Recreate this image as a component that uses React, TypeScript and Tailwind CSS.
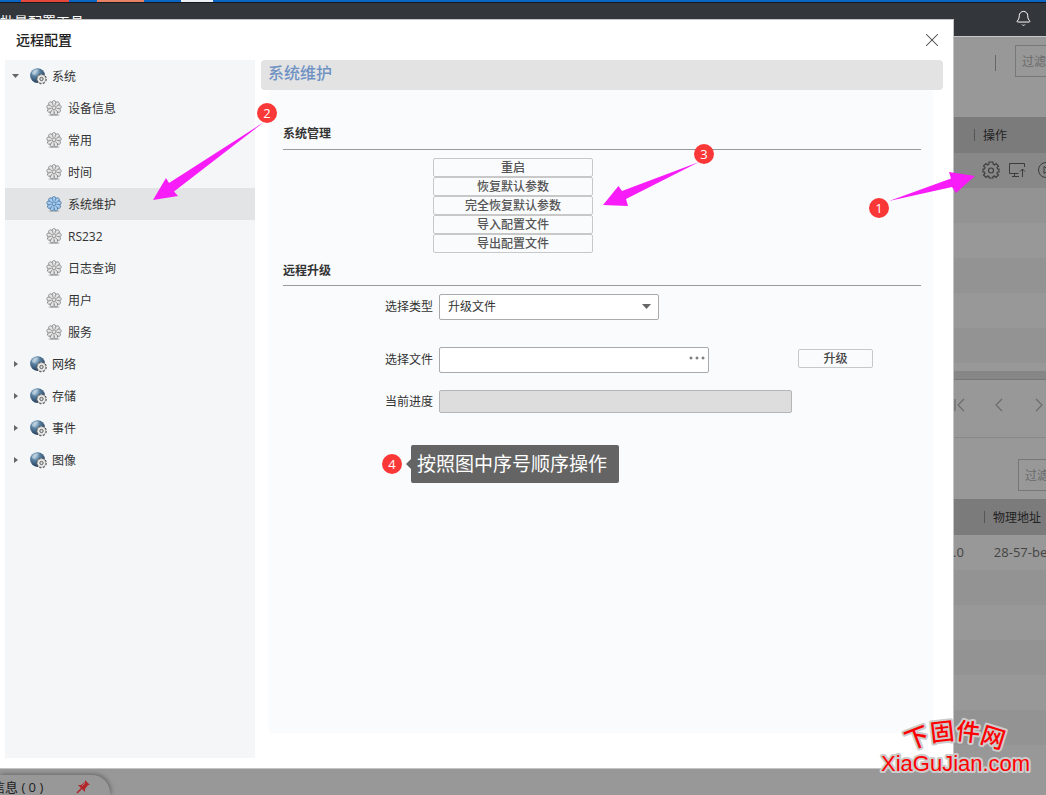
import { Bell, X } from "lucide-react";

const cjk = "font-['Open_Sans','Noto_Sans_CJK_SC',sans-serif]";

const systemItems = ["设备信息", "常用", "时间", "系统维护", "RS232", "日志查询", "用户", "服务"];
const groups = ["网络", "存储", "事件", "图像"];
const actions = ["重启", "恢复默认参数", "完全恢复默认参数", "导入配置文件", "导出配置文件"];

const GearDot = ({ active }: { active?: boolean }) => (
  <svg width="16" height="16" viewBox="0 0 16 16" className="shrink-0">
    <ellipse cx="8" cy="14.9" rx="5.5" ry="1" fill="#b9babb" />
    <circle cx="8" cy="7.8" r="6.6" fill={active ? "#84b0dc" : "#c4c4c4"} />
    <g fill={active ? "#a5caee" : "#e4e4e4"} stroke={active ? "#44729f" : "#7d7d7d"} strokeWidth="0.7">
      {[0, 40, 80, 120, 160, 200, 240, 280, 320].map((a) => (
        <ellipse key={a} cx="8" cy="2.8" rx="1.9" ry="2.3" transform={`rotate(${a} 8 7.8)`} />
      ))}
      <circle cx="8" cy="7.8" r="4.2" stroke="none" />
      <circle cx="8" cy="7.8" r="1.8" />
    </g>
    <g stroke={active ? "#5b8dbb" : "#8f8f8f"} strokeWidth="0.8">
      {[20, 60, 100, 140, 180, 220, 260, 300, 340].map((a) => (
        <path key={a} d="M8 3.4v2" transform={`rotate(${a} 8 7.8)`} />
      ))}
    </g>
  </svg>
);

const Globe = () => (
  <svg width="17" height="17" viewBox="0 0 17 17" className="shrink-0">
    <defs>
      <radialGradient id="globe" cx="0.35" cy="0.25" r="0.8">
        <stop offset="0" stopColor="#b9d0e2" />
        <stop offset="0.4" stopColor="#587f9f" />
        <stop offset="1" stopColor="#1b3552" />
      </radialGradient>
    </defs>
    <circle cx="7.5" cy="7.6" r="7.4" fill="url(#globe)" />
    <path d="M2 5c2-4 6-4 7-3L6 4 5 7 2 6z" fill="#c9dbe7" opacity="0.6" />
    <circle cx="11.5" cy="11" r="4.6" fill="#eee" stroke="#555" strokeWidth="1.4" strokeDasharray="2 1.6" />
    <circle cx="11.5" cy="11" r="4.2" fill="#eee" stroke="#777" strokeWidth="0.5" />
    <circle cx="11.5" cy="11" r="1.7" fill="#ddd" stroke="#555" strokeWidth="0.9" />
  </svg>
);

const Caret = ({ open }: { open?: boolean }) => (
  <svg width="8" height="8" viewBox="0 0 8 8" className="shrink-0" fill="#666">
    {open ? <path d="M0 2h7L3.5 6z" /> : <path d="M2 1v6l4-3z" />}
  </svg>
);

const GroupRow = ({ label, open }: { label: string; open?: boolean }) => (
  <button type="button" aria-expanded={!!open} className="flex h-8 w-full items-center pl-[7px] text-left">
    <Caret open={open} />
    <span className="ml-[10px] flex items-center gap-[5px]">
      <Globe />
      <span className="pt-[2px]">{label}</span>
    </span>
  </button>
);

const Sidebar = () => (
  <nav className="w-[250px] shrink-0 bg-[#f4f6f8] text-xs text-[#333]">
    <GroupRow label="系统" open />
    <ul>
      {systemItems.map((item) => (
        <li key={item} className={item === "系统维护" ? "bg-[#e2e4e5]" : ""}>
          <a href="#" className="flex h-8 items-center gap-[6px] pl-[41px]">
            <GearDot active={item === "系统维护"} />
            <span className="pt-[2px]">{item}</span>
          </a>
        </li>
      ))}
    </ul>
    {groups.map((g) => (
      <GroupRow key={g} label={g} />
    ))}
  </nav>
);

const Maintenance = () => (
  <main className="flex min-w-0 flex-1 flex-col">
    <h2 className="h-[30px] rounded bg-[#e3e3e3] pl-[7px] text-base leading-[26px] font-medium text-[#6f92c3]">系统维护</h2>
    <div className="mr-[10px] mb-[25px] ml-2 flex-1 bg-[#fafbfd] pr-3 pl-[14px]">
      <h3 className="mt-7 border-b border-[#999] pt-1 pb-1 text-xs leading-[23px] font-bold text-[#333]">系统管理</h3>
      <div className="mt-2 ml-[150px] flex w-40 flex-col">
        {actions.map((a) => (
          <button
            key={a}
            type="button"
            className="h-[19px] rounded-xs border border-[#c8c8c8] bg-[#fafbfd] text-xs leading-[17px] font-medium text-[#555]"
          >
            {a}
          </button>
        ))}
      </div>
      <h3 className="border-b border-[#999] pt-[6px] pb-[2px] text-xs leading-6 font-bold text-[#333]">远程升级</h3>
      <form className="mt-2 ml-[102px] text-xs text-[#333]">
        <div className="flex items-center gap-[6px]">
          <label htmlFor="kind">选择类型</label>
          <div className="relative">
            <select id="kind" className="h-[26px] w-[220px] appearance-none rounded-xs border border-[#aaa] bg-white pl-2">
              <option>升级文件</option>
            </select>
            <svg width="10" height="6" className="pointer-events-none absolute top-[10px] right-[7px]">
              <path d="M0 0h9L4.5 5z" fill="#666" />
            </svg>
          </div>
        </div>
        <div className="mt-[27px] flex items-center gap-[6px]">
          <label htmlFor="file">选择文件</label>
          <div className="relative">
            <input id="file" type="text" className="h-[26px] w-[270px] rounded-xs border border-[#aaa] bg-white px-2" />
            <button type="button" aria-label="浏览" className="absolute top-2 right-1">
              <svg width="16" height="6" fill="none" stroke="#555">
                <circle cx="2" cy="3" r="1" />
                <circle cx="8" cy="3" r="1" />
                <circle cx="14" cy="3" r="1" />
              </svg>
            </button>
          </div>
          <button
            type="button"
            className="mt-[2px] ml-[83px] h-[19px] w-[75px] self-start rounded-xs border border-[#c8c8c8] text-xs leading-[17px] font-medium text-[#444]"
          >
            升级
          </button>
        </div>
        <div className="mt-[17px] flex items-center gap-[6px]">
          <span id="progress">当前进度</span>
          <div
            role="progressbar"
            aria-labelledby="progress"
            aria-valuenow={0}
            className="h-[23px] w-[353px] rounded-xs border border-[#b5b5b5] bg-[#ddd]"
          />
        </div>
      </form>
    </div>
  </main>
);

const Dialog = () => (
  <section
    role="dialog"
    aria-label="远程配置"
    className="absolute top-[19px] right-[92px] bottom-[26px] left-0 flex flex-col border-t border-r border-b border-[#c4c4c4] bg-white"
  >
    <header className="flex h-10 shrink-0 items-center justify-between pr-[10px] pb-px pl-4">
      <h1 className="text-sm font-medium text-[#222]">远程配置</h1>
      <button type="button" aria-label="关闭">
        <X size={22} strokeWidth={1.1} color="#444" />
      </button>
    </header>
    <div className="flex flex-1 gap-[6px] pr-[10px] pb-[10px] pl-[5px]">
      <Sidebar />
      <Maintenance />
    </div>
  </section>
);

const Filter = () => (
  <input
    type="text"
    aria-label="过滤"
    defaultValue="过滤"
    className="h-8 w-40 shrink-0 border border-[#777] bg-transparent px-[6px] text-xs text-[#6b6b6b]"
  />
);

const Background = () => (
  <div className="flex min-h-screen flex-col bg-[#989898] text-xs text-[#222]">
    <div className="flex h-[2px] bg-[#0a66c2]">
      <span className="ml-[21px] w-12 bg-[#e5483b]" />
      <span className="ml-7 w-[47px] bg-[#e78266]" />
      <span className="ml-[37px] w-8 bg-[#eef0f8]" />
    </div>
    <header className="flex h-[35px] items-start justify-between border-t border-b border-t-[#17191c] border-b-[#c8c8c8] bg-[#33363b] pr-[14px] text-white">
      <span className="pt-[9px] text-sm leading-5">批量配置工具</span>
      <Bell size={17} strokeWidth={1.4} className="mt-[7px]" />
    </header>
    <div className="ml-auto flex w-[92px] flex-1 flex-col overflow-hidden whitespace-nowrap">
      <div className="flex h-20 items-start pt-2">
        <span className="mt-[10px] mr-[19px] ml-[41px] h-4 w-px shrink-0 bg-[#666]" />
        <Filter />
      </div>
      <div className="flex h-9 items-center gap-2 bg-[#7b7b7b] pl-5">
        <span className="h-3 w-px bg-[#555]" />
        <span className="pt-[2px]">操作</span>
      </div>
      <div className="flex h-[35px] items-center bg-[#888] pb-px pl-7 text-[#3c3c3c]">
        <svg width="18" height="18" viewBox="0 0 18 18" fill="none" stroke="currentColor" strokeWidth="1.1" className="shrink-0">
          <path d="M7 1h4v2l1.5 1L14 2.5 16.5 5 15 6.5 15.5 8H17v3h-1.5L15 12.5l1.5 1.5-2.5 2.5-1.5-1.5-1.5.5V17H7v-1.5L5.5 15 4 16.5 1.5 14 3 12.5 2.5 11H1V8h1.5L3 6.5 1.5 5 4 2.5 5.5 4 7 3z" />
          <circle cx="9" cy="9.5" r="2.5" />
        </svg>
        <svg width="17" height="17" viewBox="0 0 17 17" fill="none" stroke="currentColor" className="ml-[9px] shrink-0">
          <path d="M15.5 5V1.5h-15v10h9M3 14.5h7M5.5 11.500v3M13.5 15V7M11 9.5L13.5 7 16 9.5" />
        </svg>
        <svg width="16" height="16" viewBox="0 0 16 16" fill="none" stroke="currentColor" className="ml-3 shrink-0">
          <circle cx="8" cy="8" r="7.5" />
          <path d="M6 4.5v7l5-3.5z" />
        </svg>
      </div>
      <div className="h-[35px] bg-[#939393]" />
      <div className="h-[35px] bg-[#989898]" />
      <div className="h-[35px] bg-[#939393]" />
      <div className="h-[35px] bg-[#989898]" />
      <div className="h-[35px] bg-[#939393]" />
      <div className="h-2" />
      <div className="h-[9px] border-b border-[#777] bg-[#868686]" />
      <div className="flex h-[58px] items-center border-b border-[#888] pb-2 text-[#6b6b6b]">
        <svg width="92" height="16" fill="none" stroke="currentColor" strokeWidth="1.2">
          <path d="M1 2v12M10 2L4 8l6 6M48 2l-6 6 6 6M82 2l6 6-6 6" />
        </svg>
      </div>
      <div className="h-[61px] pt-[21px] pl-16">
        <Filter />
      </div>
      <div className="flex h-9 items-center gap-2 bg-[#7b7b7b] pl-[30px]">
        <span className="h-3 w-px shrink-0 bg-[#555]" />
        <span className="pt-[2px]">物理地址</span>
      </div>
      <div className="flex h-[35px] items-center gap-[30px] text-[13px] text-[#444]">
        <span className="-ml-px">.0</span>
        <span>28-57-be</span>
      </div>
      <div className="h-[35px] bg-[#939393]" />
      <div className="h-[35px]" />
      <div className="h-[35px] bg-[#939393]" />
      <div className="h-[35px]" />
      <div className="h-[35px] bg-[#939393]" />
    </div>
  </div>
);

const StatusTab = () => (
  <div className="absolute bottom-0 left-0 flex h-5 w-[110px] items-center justify-between overflow-hidden rounded-tr-[18px] bg-[#989898] pr-5 text-[13px] text-[#222] shadow-[1px_-1px_4px_#666]">
    <span className="-ml-2 pt-[6px]">信息 ( 0 )</span>
    <svg width="14" height="14" viewBox="0 0 14 14" className="mt-1">
      <path d="M1 13l5-5" stroke="#b3262b" strokeWidth="1.6" />
      <path d="M2 5h3l4-3V0l5 5h-2l-3 4v3z" fill="#b3262b" />
      <path d="M6 6l3-3" stroke="#989898" strokeWidth="0.8" />
    </svg>
  </div>
);

const Badge = ({ n, className }: { n: number; className: string }) => (
  <span
    className={`absolute flex size-5 items-center justify-center rounded-full bg-[#fb3838] text-[13px] leading-5 text-white ${className}`}
  >
    {n}
  </span>
);

const Annotations = () => (
  <div className="pointer-events-none absolute inset-0">
    <svg width="560" height="140" viewBox="150 90 560 140" className="absolute top-[90px] left-[150px]" fill="#f81cf8">
      <path d="M264 122L174 191.5 178 196 153 200 166 178 169 183z" />
      <path d="M699 162L626 199 628 206 603 205 618.5 186 622 191z" />
    </svg>
    <svg width="90" height="40" viewBox="888 165 90 40" className="absolute top-[165px] right-[68px]" fill="#f81cf8">
      <path d="M889 201L951 178.5 949 172 975 176 956 193 952 187z" />
    </svg>
    <Badge n={1} className="top-[198px] right-[157px]" />
    <Badge n={2} className="top-[103px] left-[257px]" />
    <Badge n={3} className="top-[144px] left-[694px]" />
    <Badge n={4} className="top-[454px] left-[382px]" />
    <div className="absolute top-[445px] left-[406px] flex items-center">
      <svg width="5" height="10" fill="#646464">
        <path d="M5 0v10L0 5z" />
      </svg>
      <span className="h-[38px] w-52 rounded-xs bg-[#646464] pl-[6px] text-[19px] leading-[38px] text-white">
        按照图中序号顺序操作
      </span>
    </div>
    <svg width="170" height="70" viewBox="0 0 170 70" className="absolute right-[5px] bottom-[14px]">
      <defs>
        <path id="arc" d="M38 40Q82 17 136 41" />
      </defs>
      <g fill="#f00" stroke="#ccc" strokeWidth="4" strokeLinejoin="round" paintOrder="stroke">
        <text fontSize="24" fontWeight="500">
          <textPath href="#arc">下固件网</textPath>
        </text>
        <text x="10" y="60" fontSize="22" className="font-['Liberation_Sans']">
          XiaGuJian.com
        </text>
      </g>
    </svg>
  </div>
);

export default function App() {
  return (
    <div className={`relative min-h-screen overflow-hidden ${cjk}`}>
      <Background />
      <StatusTab />
      <Dialog />
      <Annotations />
    </div>
  );
}
